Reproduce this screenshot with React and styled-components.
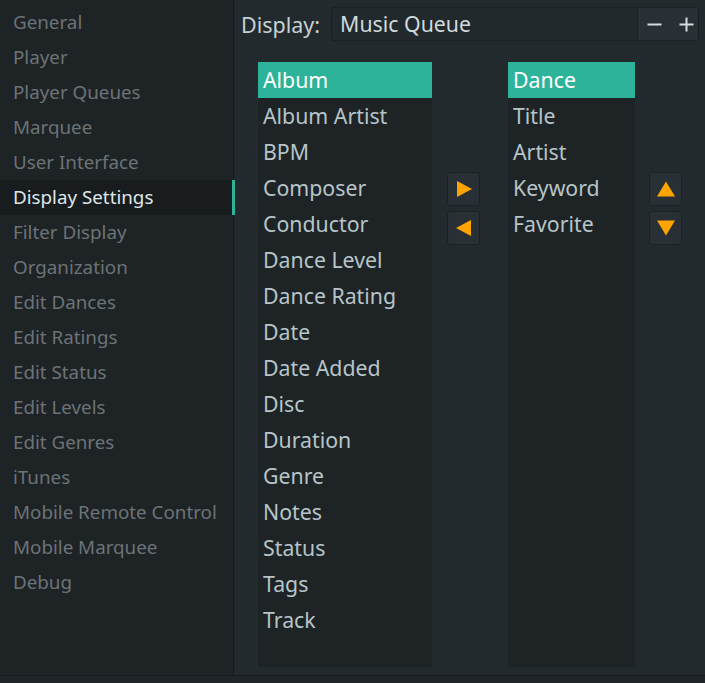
import React, { useState } from "react";
import styled, { createGlobalStyle } from "styled-components";

const GlobalStyle = createGlobalStyle`
  html, body {
    margin: 0;
    padding: 0;
    background: #232a2e;
    font-family: "Noto Sans", "Open Sans", sans-serif;
  }
`;

const Window = styled.div`
  display: flex;
  flex-direction: column;
  width: 705px;
  height: 683px;
  overflow: hidden;
`;

const Body = styled.div`
  display: flex;
  flex: 1;
  min-height: 0;
`;

const Footer = styled.div`
  height: 7px;
  background: #1f2528;
  border-top: 1px solid #171b1d;
`;

const Sidebar = styled.nav`
  width: 233px;
  padding-top: 5px;
  background: #1e2326;
  border-right: 1px solid #171b1d;
`;

const NavItem = styled.div`
  position: relative;
  height: 35px;
  line-height: 35px;
  padding-left: 13px;
  font-size: 18.8px;
  white-space: nowrap;
  color: ${({ active }) => (active ? "#dfe6e8" : "#6c7376")};
  background: ${({ active }) => (active ? "#181c1e" : "transparent")};

  &::after {
    content: "";
    display: ${({ active }) => (active ? "block" : "none")};
    position: absolute;
    right: -2px;
    top: 0;
    width: 3px;
    height: 100%;
    background: #2eb398;
  }
`;

const Main = styled.main`
  flex: 1;
  display: flex;
  flex-direction: column;
  padding: 7px 6px 8px 7px;
  background: #232a2e;
`;

const Header = styled.div`
  display: flex;
  align-items: center;
  gap: 11px;
`;

const Label = styled.span`
  font-size: 21.5px;
  color: #c6d1d4;
`;

const Combo = styled.div`
  flex: 1;
  display: flex;
  height: 32px;
  border: 1px solid #1a1f22;
  border-radius: 3px;
  background: #22292c;
  overflow: hidden;
`;

const ComboText = styled.div`
  flex: 1;
  padding-left: 8px;
  line-height: 32px;
  font-size: 21.3px;
  color: #d0dadd;
`;

const ComboButtons = styled.div`
  width: 61px;
  display: flex;
  align-items: center;
  gap: 17px;
  padding-left: 9px;
  box-sizing: border-box;
  background: #283035;
  border-left: 1px solid #1a1f22;
`;

const Lists = styled.div`
  flex: 1;
  display: flex;
  margin-top: 21px;
  padding-left: 17px;
  min-height: 0;
`;

const List = styled.ul`
  width: ${({ w }) => w}px;
  margin: 0;
  padding: 0;
  list-style: none;
  background: #1e2326;
`;

const Item = styled.li`
  height: 36px;
  line-height: 36px;
  padding-left: 5px;
  font-size: 21.3px;
  white-space: nowrap;
  color: ${({ selected }) => (selected ? "#ffffff" : "#b6c5c9")};
  background: ${({ selected }) => (selected ? "#2db39a" : "transparent")};
`;

const ButtonColumn = styled.div`
  display: flex;
  flex-direction: column;
  gap: 5px;
  margin: 110px ${({ right }) => right}px 0 ${({ left }) => left}px;
`;

const ArrowButton = styled.button`
  width: 33px;
  height: 34px;
  padding: 0;
  display: flex;
  align-items: center;
  justify-content: center;
  background: #283035;
  border: 1px solid #1c2124;
  border-radius: 3px;
  cursor: pointer;
`;

const Glyph = ({ dir }) => {
  const shapes = {
    right: "2,1 17,9 2,17",
    left: "16,1 1,9 16,17",
    up: "9,1.5 18,16.5 0,16.5",
    down: "0,1.5 18,1.5 9,16.5",
  };
  return (
    <svg width="18" height="18" viewBox="0 0 18 18">
      <polygon points={shapes[dir]} fill="#ffa400" />
    </svg>
  );
};

const Sign = ({ plus }) => (
  <svg width="15" height="15" viewBox="0 0 15 15">
    <rect x="0.5" y="6.5" width="14" height="2" fill="#d3dcde" />
    {plus && <rect x="6.5" y="0.5" width="2" height="14" fill="#d3dcde" />}
  </svg>
);

const pages = [
  "General",
  "Player",
  "Player Queues",
  "Marquee",
  "User Interface",
  "Display Settings",
  "Filter Display",
  "Organization",
  "Edit Dances",
  "Edit Ratings",
  "Edit Status",
  "Edit Levels",
  "Edit Genres",
  "iTunes",
  "Mobile Remote Control",
  "Mobile Marquee",
  "Debug",
];

const available = [
  "Album",
  "Album Artist",
  "BPM",
  "Composer",
  "Conductor",
  "Dance Level",
  "Dance Rating",
  "Date",
  "Date Added",
  "Disc",
  "Duration",
  "Genre",
  "Notes",
  "Status",
  "Tags",
  "Track",
];

const shown = ["Dance", "Title", "Artist", "Keyword", "Favorite"];

export default function App() {
  const [page, setPage] = useState("Display Settings");

  return (
    <Window>
      <GlobalStyle />
      <Body>
        <Sidebar>
          {pages.map((p) => (
            <NavItem key={p} active={p === page} onClick={() => setPage(p)}>
              {p}
            </NavItem>
          ))}
        </Sidebar>
        <Main>
          <Header>
            <Label>Display:</Label>
            <Combo>
              <ComboText>Music Queue</ComboText>
              <ComboButtons>
                <Sign />
                <Sign plus />
              </ComboButtons>
            </Combo>
          </Header>
          <Lists>
            <List w={174}>
              {available.map((f, i) => (
                <Item key={f} selected={i === 0}>
                  {f}
                </Item>
              ))}
            </List>
            <ButtonColumn left={15} right={28}>
              <ArrowButton>
                <Glyph dir="right" />
              </ArrowButton>
              <ArrowButton>
                <Glyph dir="left" />
              </ArrowButton>
            </ButtonColumn>
            <List w={127}>
              {shown.map((f, i) => (
                <Item key={f} selected={i === 0}>
                  {f}
                </Item>
              ))}
            </List>
            <ButtonColumn left={14} right={0}>
              <ArrowButton>
                <Glyph dir="up" />
              </ArrowButton>
              <ArrowButton>
                <Glyph dir="down" />
              </ArrowButton>
            </ButtonColumn>
          </Lists>
        </Main>
      </Body>
      <Footer />
    </Window>
  );
}
